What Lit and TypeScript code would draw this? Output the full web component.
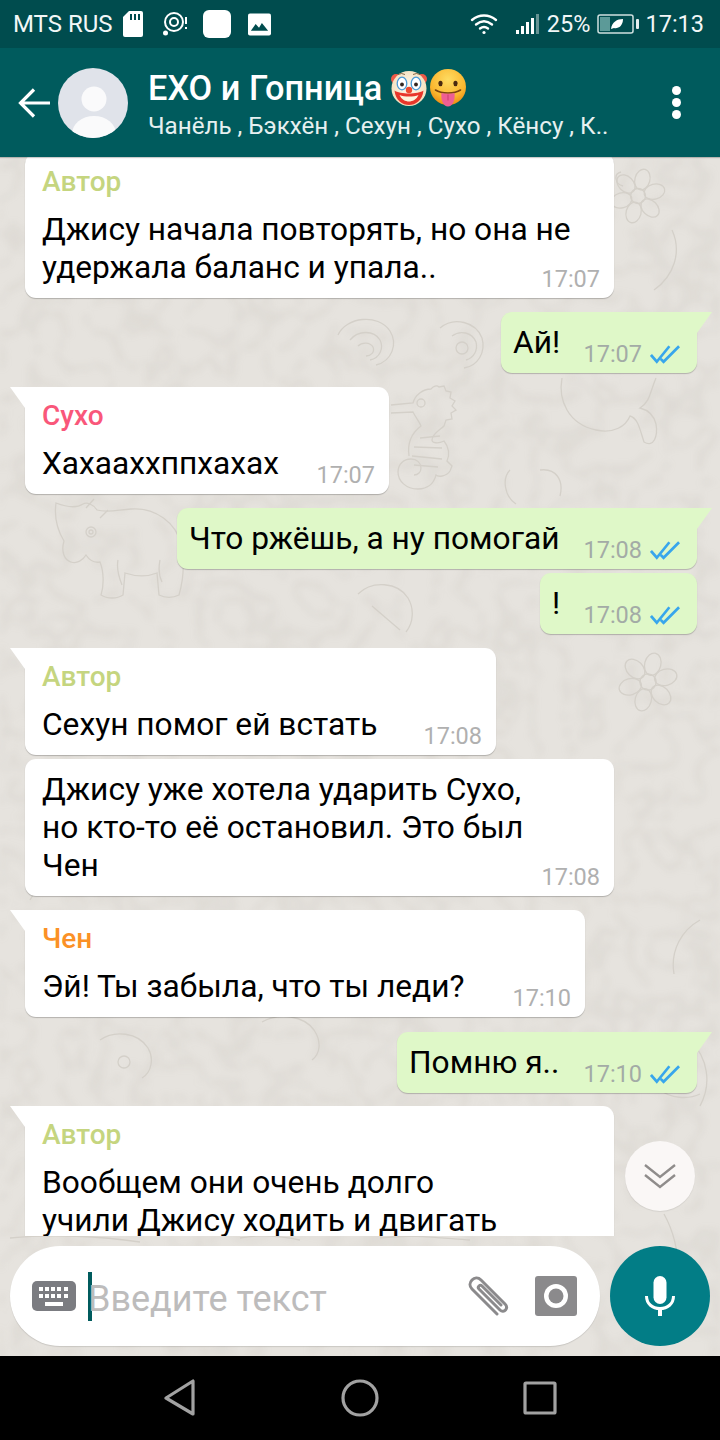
import { LitElement, html, css, svg } from "lit";
import { customElement } from "lit/decorators.js";

type Msg = { side: "in" | "out"; w: number; gap: number; tail?: boolean; author?: string; color?: string; lines: string[]; time?: string };

const AUTHOR = "#c5d57f";
const MSGS: Msg[] = [
  { side: "in", w: 589, gap: 0, author: "Автор", color: AUTHOR, lines: ["Джису начала повторять, но она не", "удержала баланс и упала.."], time: "17:07" },
  { side: "out", w: 196, gap: 14, tail: true, lines: ["Ай!"], time: "17:07" },
  { side: "in", w: 364, gap: 14, tail: true, author: "Сухо", color: "#f9577a", lines: ["Хахааххппхахах"], time: "17:07" },
  { side: "out", w: 520, gap: 14, tail: true, lines: ["Что ржёшь, а ну помогай"], time: "17:08" },
  { side: "out", w: 157, gap: 4, lines: ["!"], time: "17:08" },
  { side: "in", w: 471, gap: 14, tail: true, author: "Автор", color: AUTHOR, lines: ["Сехун помог ей встать"], time: "17:08" },
  { side: "in", w: 589, gap: 4, lines: ["Джису уже хотела ударить Сухо,", "но кто-то её остановил. Это был", "Чен"], time: "17:08" },
  { side: "in", w: 560, gap: 14, tail: true, author: "Чен", color: "#fb9126", lines: ["Эй! Ты забыла, что ты леди?"], time: "17:10" },
  { side: "out", w: 300, gap: 15, tail: true, lines: ["Помню я.."], time: "17:10" },
  { side: "in", w: 589, gap: 13, tail: true, author: "Автор", color: AUTHOR, lines: ["Вообщем они очень долго", "учили Джису ходить и двигать"] },
];

const ticks = svg`<svg class="ticks" width="31" height="20" viewBox="0 0 32 20" fill="none" stroke="#38a6ec" stroke-width="2.800"><path d="M1 11l6 7L20 2"/><path d="M11 15l3 3L30 2"/></svg>`;

const flower = (cx: number, cy: number, r: number) => svg`<g transform="translate(${cx} ${cy})">
  <circle r=${r * 0.3}/>
  ${[0, 60, 120, 180, 240, 300].map((a) => svg`<ellipse cy=${-r * 0.68} rx=${r * 0.3} ry=${r * 0.42} transform="rotate(${a + 15})"/>`)}
</g>`;

const wallpaper = svg`<svg class="paper" width="720" height="1199" viewBox="0 157 720 1199" fill="none" stroke="#d4d0c9" stroke-width="1.300">
  <defs>
    <filter id="veins" x="0" y="0" width="100%" height="100%" color-interpolation-filters="sRGB">
      <feTurbulence type="turbulence" baseFrequency="0.03" numOctaves="2" seed="11"/>
      <feColorMatrix values="0 0 0 0 0.62  0 0 0 0 0.59  0 0 0 0 0.55  -.45 0 0 0 .115"/>
      <feGaussianBlur stdDeviation="3"/>
    </filter>
  </defs>
  <rect x="0" y="157" width="720" height="1199" filter="url(#veins)" stroke="none"/>
  ${flower(638, 196, 25)}
  ${flower(648, 682, 27)}
  <path d="M621 172c-8 2-6 12 2 14M672 230c10 22 2 46-18 60"/>
  <g>
    <path d="M391 405l22-2c2-8 10-14 18-14 2-3 6-4 8-2l5-1 2 5 5 1-1 6 5 3-3 5 4 4-5 3 1 6-6 1-2 6c-4 4-12 8-12 14 0 3 6 4 12 1 5 6 6 14 3 20l5 5-2 5c-4 6-12 6-14 4-2 8-8 14-18 14-12 0-20-8-20-17 0-8 6-13 13-13 6 0 10 4 10 9 0 4-3 7-7 7"/>
    <path d="M391 413l22-1c3 6 6 9 8 14-8 6-14 16-12 30M420 438l20-2M414 447l28 1M412 456l30 3M414 465l24 2"/>
    <circle cx="421" cy="403" r="4"/>
  </g>
  <g>
    <path d="M56 503c-2 14 2 28 8 38-3 10 0 19 7 21 6 2 12-2 15-7 4 6 9 8 14 7 4 10 4 24 1 33 6 4 16 4 22 0l2-22c12 4 22 4 32 0l2 22c6 3 14 3 20 0 4-14 6-32 2-50-4-22-26-38-50-36-14 1-24 4-34 1-4-6-10-8-14-6-6 4-14 4-27-1z"/>
    <path d="M86 508l8-9M100 518l8-8M118 560c-2 10 2 20 4 25M160 560c-2 10 0 18 2 22"/>
    <circle cx="91" cy="532" r="5"/><circle cx="91" cy="532" r="2"/>
  </g>
  <g>
    <path d="M338 335c8-18 40-22 52-4 8 13 2 30-14 34M350 340c8-10 24-10 30 0 4 8 0 18-10 20M358 346c4-4 12-4 15 1 2 5-2 9-7 9"/>
    <path d="M440 328c14-12 36-6 42 10 4 14-4 28-18 30M452 336c8-6 20-4 24 6 2 8-2 16-10 18"/>
    <circle cx="462" cy="348" r="6"/>
  </g>
  <path d="M562 378c-4 22 6 46 34 52 18 4 30-4 34-14 8 2 10 14 14 26 10 6 14-6 12-18-2-8-8-14-16-16 10-6 10-16 16-30"/>
  <path d="M510 470c-8 8-6 26 6 34M540 470c16-2 24 10 20 26"/>
  <path d="M358 594c14-14 40-12 50 4 6 10 6 24-2 34M372 606l28 24M176 654c24-10 56-2 66 22"/>
  <path d="M30 900c10-20 30-30 56-24M690 1040c18 18 22 44 10 66M660 1090c10 8 28 10 40 4M700 920c-18 10-30 30-26 54"/>
  <path d="M262 1022c18-10 42-6 52 8 8 12 6 24-2 30M100 1040c14-10 38-8 48 8 6 10 4 24-6 30"/><circle cx="124" cy="1062" r="6"/>
  <path d="M660 1340c24-34 24-90 4-126M636 1310c12 8 28 8 40 0"/>
  <path d="M10 1238c40-4 90-2 130 4M240 1238c20-4 40-2 60 2M380 1238c30-4 60 0 90 2"/>
</svg>`;

const clown = svg`<svg class="emoji" width="38" height="38" viewBox="0 0 38 38">
  <defs><radialGradient id="cf" cx="50%" cy="45%" r="60%"><stop offset="0" stop-color="#fffaf0"/><stop offset="1" stop-color="#f2dcb6"/></radialGradient></defs>
  <circle cx="6" cy="10" r="5" fill="#ee5a47"/><circle cx="32" cy="10" r="5" fill="#ee5a47"/>
  <circle cx="19" cy="19.500" r="17.500" fill="url(#cf)"/>
  <ellipse cx="12" cy="14.500" rx="4.800" ry="6.300" fill="#fff" stroke="#4b9ad6" stroke-width="1.300"/><ellipse cx="26" cy="14.500" rx="4.800" ry="6.300" fill="#fff" stroke="#4b9ad6" stroke-width="1.300"/>
  <circle cx="12" cy="15.500" r="1.900" fill="#33251f"/><circle cx="26" cy="15.500" r="1.900" fill="#33251f"/>
  <path d="M8 5.500q3.500-2 7 0M23 5.500q3.500-2 7 0" fill="none" stroke="#7a5a3a" stroke-width=".9"/>
  <path d="M4.500 21.500c5 4 24 4 29 0-1 10-8 14.500-14.500 14.500S5.500 31.500 4.500 21.500z" fill="#e8362b"/>
  <path d="M9.500 26c5 2 14 2 19 0-2 4.500-6 6.500-9.500 6.500S11.500 30.500 9.500 26z" fill="#fdf3dc"/>
  <circle cx="19" cy="21" r="3.200" fill="#ee4a30"/>
</svg>`;

const tongue = svg`<svg class="emoji" width="38" height="38" viewBox="0 0 38 38">
  <defs><radialGradient id="face" cx="50%" cy="30%" r="70%"><stop offset="0" stop-color="#fedc62"/><stop offset=".7" stop-color="#fbb62e"/><stop offset="1" stop-color="#ee8d14"/></radialGradient></defs>
  <circle cx="19" cy="18" r="18" fill="url(#face)"/>
  <ellipse cx="11.500" cy="14.500" rx="2.100" ry="2.700" fill="#4a2a10"/><ellipse cx="26.500" cy="14.500" rx="2.100" ry="2.700" fill="#4a2a10"/>
  <path d="M6.500 21c6 4 19 4 25 0" fill="none" stroke="#7a4210" stroke-width="1.600" stroke-linecap="round"/>
  <path d="M12.500 24c4 1 9 1 13 0 1 7-2 13.500-6.500 13.500S11.500 31 12.500 24z" fill="#ee5f93"/>
  <path d="M19 25.500v6" stroke="#c93f70" stroke-width="1"/>
</svg>`;

@customElement("app-root")
export class AppRoot extends LitElement {
  static styles = css`
    :host { display: block; width: 720px; height: 1440px; font-family: Roboto, "Liberation Sans", sans-serif; color: #000; overflow: hidden; }
    .page { display: flex; flex-direction: column; height: 1440px; }
    .status { height: 48px; flex: none; background: #004c4e; color: #f2f7f7; font-size: 24px; display: flex; align-items: center; padding: 0 16px 0 13px; box-sizing: border-box; }
    .status svg { flex: none; display: block; }
    .carrier { width: 110px; white-space: nowrap; }
    .sp { flex: 1; }
    .blank { width: 28px; height: 28px; border-radius: 6px; background: #fff; margin: 0 17px 0 16px; }
    .pct { margin: 0 7px 0 8px; font-size: 23.500px; }
    .clock { margin-left: 6px; font-size: 23.500px; }
    .header { height: 109px; flex: none; background: #005b5d; color: #fff; display: flex; align-items: center; box-sizing: border-box; padding: 0 0 0 18px; position: relative; z-index: 2; box-shadow: 0 1px 1px rgba(0,0,0,.2); }
    .avatar { margin: 0 20px 0 8px; flex: none; }
    .titles { flex: 1; min-width: 0; padding-top: 7px; }
    .title { font-size: 34.300px; font-weight: 500; line-height: 40px; display: flex; align-items: center; white-space: nowrap; height: 40px; }
    .title span { margin-right: 8px; }
    .emoji { flex: none; display: block; margin-right: 1px; }
    .sub { font-size: 24.200px; line-height: 36px; white-space: nowrap; color: #e6f0f0; }
    .dots { display: flex; flex-direction: column; gap: 3px; margin-right: 39.500px; flex: none; }
    .dots i { width: 9px; height: 9px; border-radius: 50%; background: #fff; display: block; }
    .chat { flex: 1; min-height: 0; display: flex; flex-direction: column; position: relative; background: #e6e3de; overflow: hidden; }
    .paper { position: absolute; left: 0; top: 0; pointer-events: none; }
    .list { flex: 1; min-height: 0; overflow: hidden; position: relative; display: flex; flex-direction: column; padding: 0 23px 0 25px; margin-top: -4px; }
    .bubble { flex: none; box-sizing: border-box; position: relative; border-radius: 11px; padding: 14px 14px 11px 17px; box-shadow: 0 1px 1px rgba(0,0,0,.22); background: #fff; }
    .bubble.out { background: #dff8c8; align-self: flex-end; padding: 12px 16px 11px 12px; }
    .bubble.in { align-self: flex-start; }
    .bubble.noauthor { padding-top: 12px; padding-bottom: 11px; }
    .bubble.tail.in { border-top-left-radius: 0; }
    .bubble.tail.out { border-top-right-radius: 0; }
    .bubble.tail::before { content: ""; position: absolute; top: 0; width: 15px; height: 21px; background: inherit; }
    .bubble.tail.in::before { left: -15px; clip-path: polygon(0 0, 100% 0, 100% 100%); }
    .bubble.tail.out::before { right: -15px; clip-path: polygon(0 0, 100% 0, 0 100%); }
    .author { font-size: 28px; font-weight: 500; line-height: 30px; margin-bottom: 14px; }
    .row { display: flex; }
    .text { flex: 1; min-width: 0; font-size: 31.700px; line-height: 38px; white-space: nowrap; }
    .meta { align-self: flex-end; margin-bottom: -5px; height: 26px; display: flex; align-items: center; gap: 8px; color: #a3aba6; font-size: 23.500px; line-height: 26px; flex: none; }
    .in .meta { color: #b0b0b0; }
    .ticks { display: block; }
    .down { position: absolute; left: 625px; top: 984px; width: 70px; height: 70px; border-radius: 50%; background: #faf7f6; display: flex; align-items: center; justify-content: center; box-shadow: 0 1px 1px rgba(0,0,0,.08); }
    .composer { flex: none; position: relative; display: flex; gap: 10px; padding: 10px; }
    .input { flex: 1; height: 100px; border-radius: 50px; background: #fff; display: flex; align-items: center; padding: 0 23px 0 22px; box-sizing: border-box; box-shadow: 0 1px 1px rgba(0,0,0,.12); }
    .cursor { width: 4px; height: 49px; background: #005b5d; margin: 0 -4px 0 12px; flex: none; }
    .ph { flex: 1; font-size: 36px; line-height: 44px; color: #bdbcbc; white-space: nowrap; position: relative; top: 3px; }
    .clip { margin-right: 26px; flex: none; }
    .mic { width: 100px; height: 100px; border-radius: 50%; background: #027d86; display: flex; align-items: center; justify-content: center; flex: none; }
    .nav { height: 84px; flex: none; background: #000; display: flex; align-items: center; }
    .nav div { flex: none; display: flex; justify-content: center; width: 180px; }
    .nav div:first-child { margin-left: 90px; }
    .nav svg { display: block; }
  `;

  private bubble(m: Msg) {
    const cls = `bubble ${m.side} ${m.tail ? "tail" : ""} ${m.side === "in" && !m.author ? "noauthor" : ""}`;
    return html`<div class=${cls} style="width:${m.w}px;margin-top:${m.gap}px">
      ${m.author ? html`<div class="author" style="color:${m.color}">${m.author}</div>` : null}
      <div class="row">
        <div class="text">${m.lines.map((l, i) => html`${i ? html`<br />` : null}${l}`)}</div>
        ${m.time ? html`<div class="meta">${m.time}${m.side === "out" ? ticks : null}</div>` : null}
      </div>
    </div>`;
  }

  render() {
    return html`<div class="page">
      <div class="status">
        <span class="carrier">MTS RUS</span>
        <svg width="20" height="26" viewBox="0 0 20 26"><path d="M6 0h12a2 2 0 012 2v22a2 2 0 01-2 2H2a2 2 0 01-2-2V6z" fill="#fff"/><path d="M8 3v6M12 3v6M16 3v6" stroke="#004c4e" stroke-width="2"/></svg>
        <svg style="margin-left:20px" width="24" height="26" viewBox="0 0 24 26" fill="none" stroke="#fff"><circle cx="11" cy="11" r="9" stroke-width="2"/><circle cx="11" cy="11" r="4" stroke-width="2"/><circle cx="2.500" cy="22" r="2.500" fill="#fff" stroke="none"/><path d="M23 6v7M23 16v2" stroke-width="2"/></svg>
        <div class="blank"></div>
        <svg width="23" height="23" viewBox="0 0 24 23"><rect width="24" height="23" rx="2" fill="#fff"/><path d="M3 18l5-7 3.500 4 3-5 6.500 8z" fill="#004c4e"/></svg>
        <div class="sp"></div>
        <svg width="28" height="22" viewBox="0 0 28 22" fill="none" stroke="#fff" stroke-width="2.400" stroke-linecap="round"><path d="M2 7c7-6 17-6 24 0M6 11.500c5-4 11-4 16 0M10 15.500c2.500-2 5.500-2 8 0"/><circle cx="14" cy="19.500" r="1.600" fill="#fff" stroke="none"/></svg>
        <svg style="margin-left:18px" width="23" height="22" viewBox="0 0 23 22" fill="#fff"><rect x="0" y="17" width="3" height="4"/><rect x="5" y="13" width="3" height="8"/><rect x="10" y="9" width="3" height="12"/><rect x="15" y="5" width="3" height="16"/><rect x="20" y="1" width="3" height="20" opacity=".4"/></svg>
        <span class="pct">25%</span>
        <svg width="42" height="20" viewBox="0 0 42 20" fill="none"><rect x="1" y="1" width="35" height="18" rx="2" stroke="#cfe0df" stroke-width="1.500"/><rect x="3" y="3" width="10" height="14" fill="#5c9a98"/><rect x="39" y="5" width="3" height="10" rx="1" fill="#e8f0f0"/><path d="M14 15c1-7 6-10 12-10 0 7-5 10-9 9z" fill="#fff"/></svg>
        <span class="clock">17:13</span>
      </div>
      <div class="header">
        <svg width="32" height="30" viewBox="0 0 32 30" fill="none" stroke="#fff" stroke-width="3.200"><path d="M32 15H2M16 1.500L2.500 15 16 28.500"/></svg>
        <svg class="avatar" width="70" height="70" viewBox="0 0 70 70"><defs><clipPath id="av"><circle cx="35" cy="35" r="35"/></clipPath></defs><circle cx="35" cy="35" r="35" fill="#e0e3ea"/><circle cx="36" cy="31" r="12.500" fill="#fafafb"/><ellipse cx="36" cy="66" rx="22" ry="18" fill="#fafafb" clip-path="url(#av)"/></svg>
        <div class="titles">
          <div class="title"><span>EXO и Гопница</span>${clown}${tongue}</div>
          <div class="sub">Чанёль , Бэкхён , Сехун , Сухо , Кёнсу , К..</div>
        </div>
        <div class="dots"><i></i><i></i><i></i></div>
      </div>
      <div class="chat">
        ${wallpaper}
        <div class="list">${MSGS.map((m) => this.bubble(m))}</div>
        <div class="down"><svg width="32" height="26" viewBox="0 0 32 26" fill="none" stroke="#8f8c8b" stroke-width="2.400"><path d="M1 2l15 12L31 2M1 12l15 12 15-12"/></svg></div>
        <div class="composer">
          <div class="input">
            <svg width="44" height="30" viewBox="0 0 44 30"><rect width="44" height="30" rx="5" fill="#7b7c81"/><g fill="#fff"><rect x="7" y="6" width="4" height="4"/><rect x="13" y="6" width="4" height="4"/><rect x="19" y="6" width="4" height="4"/><rect x="25" y="6" width="4" height="4"/><rect x="32" y="6" width="4" height="4"/><rect x="7" y="13" width="4" height="4"/><rect x="13" y="13" width="4" height="4"/><rect x="19" y="13" width="4" height="4"/><rect x="25" y="13" width="4" height="4"/><rect x="32" y="13" width="4" height="4"/><rect x="13" y="21" width="18" height="4"/></g></svg>
            <div class="cursor"></div>
            <div class="ph">Введите текст</div>
            <svg class="clip" width="43" height="41" viewBox="0 0 43 41" fill="none" stroke="#8b8a8c" stroke-width="3" stroke-linecap="round"><path d="M31 38L6 13c-6-6 3-15 9-9l24 24c4 4-1 10-5 6L13 13c-2-2 1-5 3-3l19 19"/></svg>
            <svg width="42" height="40" viewBox="0 0 42 40"><rect width="42" height="40" rx="3" fill="#8b8a8c"/><circle cx="21" cy="20" r="12" fill="#fff"/><circle cx="21" cy="20" r="7.500" fill="#8b8a8c"/></svg>
          </div>
          <div class="mic"><svg width="30" height="40" viewBox="0 0 30 40" fill="none"><rect x="8.500" y="0" width="13" height="28" rx="6.500" fill="#fff"/><path d="M1.500 20c0 8 6 12.500 13.500 12.500S28.500 28 28.500 20" stroke="#fff" stroke-width="3"/><path d="M15 32v8" stroke="#fff" stroke-width="4"/></svg></div>
        </div>
      </div>
      <div class="nav">
        <div><svg width="34" height="38" viewBox="0 0 34 38" fill="none" stroke="#a2a2a2" stroke-width="3.200" stroke-linejoin="round"><path d="M30 2v33L3 19z"/></svg></div>
        <div><svg width="38" height="38" viewBox="0 0 38 38" fill="none" stroke="#a2a2a2" stroke-width="3.200"><circle cx="19" cy="19" r="17"/></svg></div>
        <div><svg width="34" height="34" viewBox="0 0 34 34" fill="none" stroke="#a2a2a2" stroke-width="3.200" stroke-linejoin="round"><rect x="2" y="2" width="30" height="30" rx="1"/></svg></div>
      </div>
    </div>`;
  }
}
